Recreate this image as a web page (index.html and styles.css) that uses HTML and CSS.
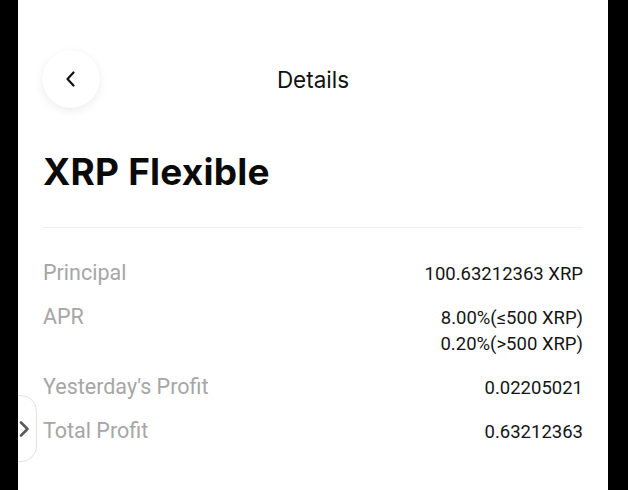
FILE: index.html
```html
<!DOCTYPE html>
<html lang="en">
<head>
    <meta charset="UTF-8">
    <meta name="viewport" content="width=device-width, initial-scale=1.0">
    <title>Details</title>
    <link rel="stylesheet" href="styles.css">
</head>
<body>

<div class="screen">
    <!-- 상단 헤더 -->
    <div class="top-bar">
        <button class="back-button" aria-label="Back">
            <svg width="12" height="16" viewBox="0 0 12 16">
                <path d="M8.5 1.5 L2.5 8 L8.5 14.5" fill="none" stroke="#111" stroke-width="2.2" stroke-linecap="round" stroke-linejoin="round"/>
            </svg>
        </button>
        <h1 class="top-title">Details</h1>
        <span class="top-spacer"></span>
    </div>

    <h2 class="product-name">XRP Flexible</h2>

    <div class="divider"></div>

    <!-- 상세 정보 -->
    <div class="info-list">
        <div class="info-row">
            <span class="info-label">Principal</span>
            <span class="info-value">100.63212363 XRP</span>
        </div>
        <div class="info-row">
            <span class="info-label">APR</span>
            <span class="info-value">8.00%(≤500 XRP)<br>0.20%(&gt;500 XRP)</span>
        </div>
        <div class="info-row">
            <span class="info-label">Yesterday's Profit</span>
            <span class="info-value">0.02205021</span>
        </div>
        <div class="info-row">
            <span class="info-label">Total Profit</span>
            <span class="info-value">0.63212363</span>
        </div>
    </div>

    <!-- 왼쪽 가장자리 탭 -->
    <div class="side-tab">
        <svg width="12" height="18" viewBox="0 0 12 18">
            <path d="M3 2.5 L9.5 9 L3 15.5" fill="none" stroke="#5a5a5a" stroke-width="2.6" stroke-linecap="round" stroke-linejoin="round"/>
        </svg>
    </div>
</div>

</body>
</html>
```

FILE: styles.css
```css
body {
    margin: 0;
    background-color: #000000;
    font-family: Roboto, "Noto Sans", sans-serif;
}

.screen {
    position: relative;
    overflow: hidden;
    margin: 0 20px 0 18px;
    min-height: 490px;
    background-color: #ffffff;
    padding: 50px 25px 0 25px;
    box-sizing: border-box;
}

/* 헤더 */
.top-bar {
    display: grid;
    grid-template-columns: 58px 1fr 58px;
    align-items: center;
    height: 58px;
}

.back-button {
    width: 58px;
    height: 58px;
    margin-left: -1px;
    border: none;
    border-radius: 50%;
    background-color: #ffffff;
    box-shadow: 0 3px 10px rgba(0,0,0,0.07), 0 0 2px rgba(0,0,0,0.03);
    display: flex;
    align-items: center;
    justify-content: center;
    padding: 0;
}

.top-title {
    margin: 0;
    text-align: center;
    font-family: Inter, sans-serif;
    font-size: 22.5px;
    font-weight: 400;
    color: #111111;
}

/* 상품 이름 */
.product-name {
    margin: 42px 0 0 0;
    font-family: Inter, sans-serif;
    font-size: 37px;
    line-height: 44px;
    font-weight: 700;
    color: #0a0a0a;
    letter-spacing: 0.2px;
}

.divider {
    height: 1px;
    background-color: #efefef;
    margin-top: 33px;
}

/* 정보 목록 */
.info-list {
    display: flex;
    flex-direction: column;
    gap: 18px;
    margin-top: 33px;
}

.info-row {
    display: flex;
    justify-content: space-between;
    align-items: baseline;
}

.info-label {
    font-size: 21.5px;
    line-height: 24px;
    font-weight: 400;
    color: #a6a6a6;
}

.info-value {
    font-size: 18.5px;
    line-height: 26px;
    color: #151515;
    text-align: right;
}

/* 가장자리 탭 */
.side-tab {
    position: absolute;
    left: -20px;
    top: 395px;
    width: 39px;
    height: 67px;
    border: 1px solid #e2e2e2;
    border-radius: 16px;
    background-color: #ffffff;
    display: flex;
    align-items: center;
    justify-content: flex-end;
    padding-right: 6px;
    box-sizing: border-box;
}
```
